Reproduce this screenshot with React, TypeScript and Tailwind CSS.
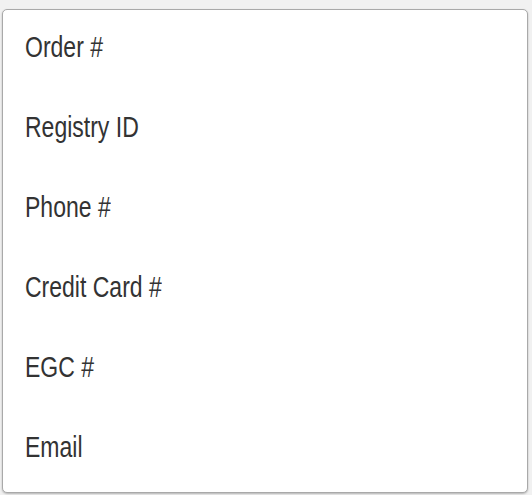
const options = ['Order #', 'Registry ID', 'Phone #', 'Credit Card #', 'EGC #', 'Email'];

export default function App() {
  return (
    <div className="w-[532px] h-[495px] bg-[#f1f1f1] pt-[9px] pl-[2px] overflow-hidden">
      <div className="w-[526px] h-[484px] bg-white border border-[#a9a9a9] rounded-[5px] shadow-[0_1px_2px_rgba(0,0,0,0.25)] pt-[17px] pl-[22px]">
        <ul className="flex flex-col gap-[40px]">
          {options.map((label) => (
            <li
              key={label}
              className="h-[40px] flex items-center text-[#333] text-[23px] font-['Liberation_Sans',Arial,sans-serif]"
            >
              <span className="inline-block scale-y-[1.3] origin-center">{label}</span>
            </li>
          ))}
        </ul>
      </div>
    </div>
  );
}
